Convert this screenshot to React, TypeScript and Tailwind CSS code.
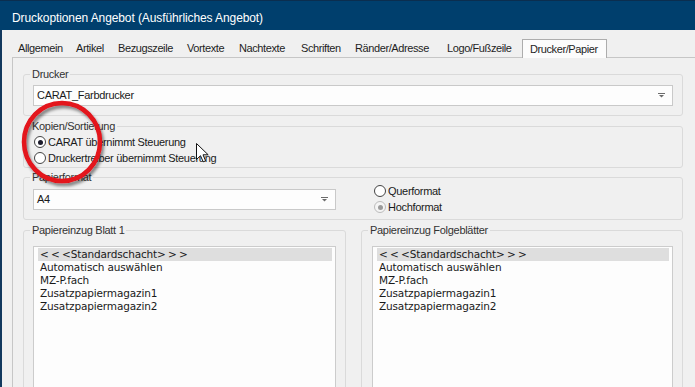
import React from "react";

const tabs = [
  { label: "Allgemein", w: "w-[58px]" },
  { label: "Artikel", w: "w-[42px]" },
  { label: "Bezugszeile", w: "w-[69px]" },
  { label: "Vortexte", w: "w-[52px]" },
  { label: "Nachtexte", w: "w-[62px]" },
  { label: "Schriften", w: "w-[54px]" },
  { label: "Ränder/Adresse", w: "w-[92px]" },
  { label: "Logo/Fußzeile", w: "w-[81px]" },
];

const trays = ["Automatisch auswählen", "MZ-P.fach", "Zusatzpapiermagazin1", "Zusatzpapiermagazin2"];

function Arrow() {
  return (
    <svg width="7" height="5" viewBox="0 0 7 5" className="shrink-0">
      <rect x="0" y="0" width="7" height="1" fill="#6b6b6b" />
      <path d="M1 2h5L3.5 4.5z" fill="#6b6b6b" />
    </svg>
  );
}

function Combo({ value, className }: { value: string; className: string }) {
  return (
    <div
      className={`flex h-[21px] items-center justify-between border border-[#c9c9c9] bg-[#fdfdfd] pl-[3px] pr-[7px] text-[#1a1a1a] ${className}`}
    >
      <span>{value}</span>
      <Arrow />
    </div>
  );
}

function Radio({ label, checked, disabled }: { label: string; checked?: boolean; disabled?: boolean }) {
  return (
    <div className="flex h-[16px] items-center">
      <span
        className={`ml-[1px] flex h-[12px] w-[12px] items-center justify-center rounded-full border ${
          disabled ? "border-[#bcbcbc] bg-[#f4f4f4]" : "border-[#444444] bg-white"
        }`}
      >
        {checked && (
          <span className={`h-[5px] w-[5px] rounded-full ${disabled ? "bg-[#9a9a9a]" : "bg-[#1b1b2b]"}`} />
        )}
      </span>
      <span className="ml-[2px] text-[#1a1a1a]">{label}</span>
    </div>
  );
}

function Group({ title, className, children }: { title: string; className: string; children: React.ReactNode }) {
  return (
    <fieldset className={`rounded-[3px] border border-[#dadada] px-[9px] ${className}`}>
      <legend className="-ml-[3px] px-[2px] text-[11px] leading-[14px] text-[#333333]">{title}</legend>
      {children}
    </fieldset>
  );
}

function ListBox({ className }: { className: string }) {
  return (
    <div
      className={`h-[160px] border border-[#cccccc] bg-[#fdfdfd] pl-[4px] pr-[3px] pt-[1px] font-['DejaVu_Sans',sans-serif] text-[10.5px] tracking-[-0.15px] text-[#1a1a1a] ${className}`}
    >
      <div className="h-[13px] bg-[#dedede] pl-[2px] leading-[13px]">
        <span className="tracking-[2.2px]">{"<<"}</span>
        {"<Standardschacht"}
        <span className="tracking-[2.2px]">{">>"}</span>
        {">"}
      </div>
      {trays.map((t) => (
        <div key={t} className="h-[13px] pl-[2px] leading-[13px]">
          {t}
        </div>
      ))}
    </div>
  );
}

export default function App() {
  return (
    <div className="relative h-[387px] w-[695px] overflow-hidden bg-[#f0f0f0] font-['Liberation_Sans',Arial,sans-serif] text-[11px] tracking-[-0.3px]">
      {/* title bar */}
      <div className="h-[30px] border-t border-[#0b2e4f] bg-[#003f6d] pl-[12px] pt-[9px] text-[12px] leading-[16px] tracking-[-0.1px] text-white">
        Druckoptionen Angebot (Ausführliches Angebot)
      </div>

      <div className="flex h-[357px] flex-col border-l-2 border-[#12395e]">
        {/* tabs */}
        <div className="relative z-10 ml-[10px] mt-[9px] flex h-[18px] items-start text-[#1e1e1e]">
          {tabs.map((t) => (
            <div key={t.label} className={`${t.w} h-[18px] pl-[6px] leading-[18px] tracking-[-0.4px]`}>
              {t.label}
            </div>
          ))}
          <div className="h-[19px] w-[85px] border-x border-t border-[#adadad] bg-[#fcfcfc] pl-[7px] leading-[18px] tracking-[-0.4px]">
            Drucker/Papier
          </div>
        </div>

        {/* tab page */}
        <div className="ml-[10px] flex-1 border-l border-t border-[#c6c6c6] pl-[10px] pt-[9px]">
          <Group title="Drucker" className="w-[660px] pb-[9px]">
            <Combo value="CARAT_Farbdrucker" className="mt-[4px]" />
          </Group>

          <Group title="Kopien/Sortierung" className="mt-[3px] w-[660px] pb-[1px]">
            <div className="pt-[1px]">
              <Radio label="CARAT übernimmt Steuerung" checked />
              <Radio label="Druckertreiber übernimmt Steuerung" />
            </div>
          </Group>

          <Group title="Papierformat" className="mt-[2px] w-[660px] pb-[9px]">
            <div className="flex h-[26px] items-start">
              <Combo value="A4" className="mt-[5px] w-[303px]" />
              <div className="ml-[37px] -mt-[1px]">
                <Radio label="Querformat" />
                <Radio label="Hochformat" checked disabled />
              </div>
            </div>
          </Group>

          <div className="mt-[3px] flex gap-[15px]">
            <Group title="Papiereinzug Blatt 1" className="h-[200px] w-[323px]">
              <ListBox className="mt-[9px]" />
            </Group>
            <Group title="Papiereinzug Folgeblätter" className="h-[200px] w-[322px]">
              <ListBox className="ml-[1px] mt-[9px]" />
            </Group>
          </div>
        </div>
      </div>

      {/* red annotation circle */}
      <svg className="pointer-events-none absolute left-[15px] top-[94px]" width="100" height="100" viewBox="0 0 100 100">
        <defs>
          <filter id="shade" x="-20%" y="-20%" width="140%" height="140%">
            <feDropShadow dx="2" dy="3" stdDeviation="1.6" floodColor="#000000" floodOpacity="0.45" />
          </filter>
        </defs>
        <ellipse cx="47" cy="48" rx="38" ry="39" fill="none" stroke="#e3121a" strokeWidth="4.5" filter="url(#shade)" />
      </svg>

      {/* mouse cursor */}
      <svg className="pointer-events-none absolute left-[196px] top-[143px]" width="13" height="20" viewBox="0 0 13 20">
        <path d="M0.5 0.5V16.5L4.5 12.7L7.2 18.8L9.6 17.8L7 11.8H12.2Z" fill="#ffffff" stroke="#111111" strokeWidth="1" />
      </svg>
    </div>
  );
}
